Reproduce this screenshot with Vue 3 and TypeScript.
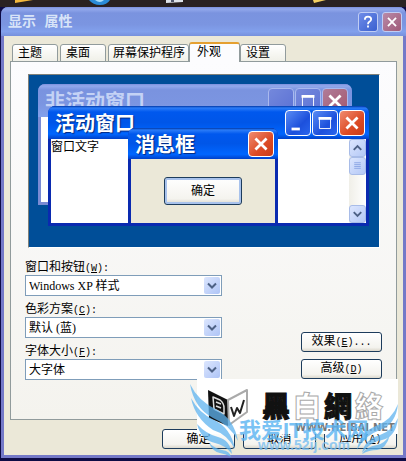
<script setup lang="ts">
import { ref } from 'vue'

interface Field {
  id: string
  label: string
  key: string
  value: string
}

const tabs = ['主题', '桌面', '屏幕保护程序', '外观', '设置']
const activeTab = ref('外观')

const fields = ref<Field[]>([
  { id: 'style', label: '窗口和按钮', key: 'W', value: 'Windows XP 样式' },
  { id: 'scheme', label: '色彩方案', key: 'C', value: '默认 (蓝)' },
  { id: 'size', label: '字体大小', key: 'F', value: '大字体' },
])
</script>

<template>
  <div class="desktop">
    <div class="strip">
      <svg viewBox="0 0 406 7" preserveAspectRatio="none" aria-hidden="true">
        <path d="M15 0h18l-6 1-12 2z" fill="#f3b83d" />
        <path d="M89 0h21q-3 5-10 5t-11-5z" fill="#2b8cd8" />
        <path d="M95 0h9q-4 4-9 0z" fill="#a9dcf8" />
        <path d="M166 0h17v2l-17 1z" fill="#dfe3ea" />
        <path d="M171 0h3v2h-3z" fill="#50566a" />
        <path d="M313 0h13l-12 3z" fill="#f5d060" />
      </svg>
    </div>
    <main class="window">
      <header class="titlebar">
        <h1>显示 属性</h1>
        <button class="cap help" type="button" aria-label="帮助">
          <svg viewBox="0 0 20 20"><path d="M6.5 7.5q0-3.500 3.500-3.500t3.500 3q0 1.600-2 2.800-1.500.9-1.500 2.700M10 14v2.200" /></svg>
        </button>
        <button class="cap close" type="button" aria-label="关闭">
          <svg viewBox="0 0 20 20"><path d="M5.500 5.500l9 9M14.500 5.500l-9 9" /></svg>
        </button>
      </header>

      <div class="body">
        <nav class="tabs" role="tablist">
          <button
            v-for="t in tabs"
            :key="t"
            type="button"
            role="tab"
            class="tab"
            :class="{ active: t === activeTab }"
            :aria-selected="t === activeTab"
            @click="activeTab = t"
          >{{ t }}</button>
        </nav>

        <section class="panel">
          <div class="preview">
            <div class="win inactive">
              <div class="bar">
                <span>非活动窗口</span>
                <button class="ctl" type="button" aria-label="最小化"></button>
                <button class="ctl" type="button" aria-label="最大化">
                  <svg viewBox="0 0 26 26"><path d="M7 8h12v11H7z" /><path class="thick" d="M6 8h14" /></svg>
                </button>
                <button class="ctl red" type="button" aria-label="关闭">
                  <svg viewBox="0 0 26 26"><path class="cross" d="M7 7l12 12M19 7L7 19" /></svg>
                </button>
              </div>
              <div class="client"></div>
            </div>

            <div class="win current">
              <div class="bar">
                <span>活动窗口</span>
                <button class="ctl" type="button" aria-label="最小化">
                  <svg viewBox="0 0 26 26"><path class="thick" d="M6 19.500h9" /></svg>
                </button>
                <button class="ctl" type="button" aria-label="最大化">
                  <svg viewBox="0 0 26 26"><path d="M7 8h12v11H7z" /><path class="thick" d="M6 8h14" /></svg>
                </button>
                <button class="ctl red" type="button" aria-label="关闭">
                  <svg viewBox="0 0 26 26"><path class="cross" d="M7 7l12 12M19 7L7 19" /></svg>
                </button>
              </div>
              <div class="client">
                <p>窗口文字</p>
                <div class="scroll">
                  <button class="sb" type="button" aria-label="向上">
                    <svg viewBox="0 0 16 16"><path d="M4 10l4-4 4 4" /></svg>
                  </button>
                  <div class="sb thumb">
                    <svg viewBox="0 0 16 16"><path d="M4.500 4.500h7M4.500 6.500h7M4.500 8.500h7M4.500 10.500h7" /></svg>
                  </div>
                  <button class="sb down" type="button" aria-label="向下">
                    <svg viewBox="0 0 16 16"><path d="M4 6l4 4 4-4" /></svg>
                  </button>
                </div>
              </div>
            </div>

            <div class="win message">
              <div class="bar">
                <span>消息框</span>
                <button class="ctl red" type="button" aria-label="关闭">
                  <svg viewBox="0 0 26 26"><path class="cross" d="M7 7l12 12M19 7L7 19" /></svg>
                </button>
              </div>
              <div class="client">
                <button class="btn focus" type="button">确定</button>
              </div>
            </div>
          </div>

          <div class="settings">
            <form class="fields" @submit.prevent>
              <div v-for="f in fields" :key="f.id" class="field">
                <label :for="f.id">{{ f.label }}<span class="mono">(<u>{{ f.key }}</u>):</span></label>
                <div class="combo">
                  <select :id="f.id" v-model="f.value">
                    <option :value="f.value">{{ f.value }}</option>
                  </select>
                  <svg viewBox="0 0 16 16" aria-hidden="true"><path d="M4 6l4 4 4-4" /></svg>
                </div>
              </div>
            </form>
            <div class="side">
              <button class="btn" type="button">效果<span class="mono">(<u>E</u>)...</span></button>
              <button class="btn" type="button">高级<span class="mono">(<u>D</u>)</span></button>
            </div>
          </div>
        </section>

        <footer class="actions">
          <button class="btn" type="button">确定</button>
          <button class="btn" type="button">取消</button>
          <button class="btn" type="button">应用<span class="mono">(<u>A</u>)</span></button>
        </footer>
      </div>
    </main>

    <svg class="watermark" viewBox="0 0 220 85" aria-hidden="true">
      <path d="M11 3h201v55H11z" fill="#fff" />
      <g stroke-linejoin="round">
        <path d="M22 14l20 10v26l-19-8z" fill="#111" />
        <path d="M42 24l19-10v22L43 49z" fill="#fff" stroke="#aaa" stroke-width="2" />
        <path d="M27 21l7 3q4 3 4 8v6l-10-5z" fill="none" stroke="#ddd" stroke-width="1.500" />
        <path d="M30 26l5 2M30 30l5 2" stroke="#ddd" stroke-width="1.500" />
        <path d="M45 31l3 9 3-8 3 5 4-13" fill="none" stroke="#222" stroke-width="2" />
      </g>
      <g class="brand">
        <text x="76" y="41">黑</text>
        <text x="107" y="41" class="hollow">白</text>
        <text x="138" y="41">網</text>
        <text x="169" y="41" class="hollow">絡</text>
      </g>
      <text class="site" x="109" y="55">WWW.HEIBAI.NET</text>
      <g class="wings">
        <path d="M4 8q8 17 27 26 17 9 21 31-8-16-25-23Q8 32 4 8z" />
        <path d="M5 22q8 15 23 22 17 8 21 29-8-15-22-19Q9 42 5 22z" />
        <path d="M11 48q9 10 21 13 12 3 14 17-7-9-17-11-14-3-18-19z" />
        <path d="M23 67q7 6 13 7 8 1 9 7-5-3-11-4-7-1-11-10z" />
        <path d="M212 28q-6 16-22 22-16 6-19 24 8-15 23-20 16-6 18-26z" />
        <path d="M212 42q-6 13-18 17-15 4-18 18 8-11 20-13 14-3 16-22z" />
        <path d="M204 59q-6 9-13 10-11 2-15 9 7-4 15-4 9-1 13-15z" />
      </g>
      <text class="name" x="53" y="62">我爱IT技术网</text>
      <text class="url" x="72" y="74">www.52ij.com</text>
    </svg>
  </div>
</template>

<style>
body {
  margin: 0;
}
</style>

<style scoped>
* {
  box-sizing: border-box;
}

.desktop {
  position: relative;
  min-height: 100vh;
  padding-bottom: 2px;
  background: #0d0b45;
  font: 12px/16px "Liberation Serif", "Noto Sans CJK SC", sans-serif;
  color: #000;
}

.strip {
  height: 7px;
  background: #2a2222;
}

.strip svg {
  display: block;
  width: 100%;
  height: 7px;
}

.window {
  margin-left: 1px;
  border: solid #7479c8;
  border-width: 0 3px 3px;
  border-radius: 7px 7px 0 0;
  background: #7479c8;
}

.titlebar {
  display: flex;
  align-items: center;
  gap: 4px;
  height: 29px;
  margin: 0 -3px;
  padding: 1px 4px 0 7px;
  border-radius: 7px 7px 0 0;
  background: linear-gradient(#7b8fdc 0, #93a9ec 2px, #7a93df 6px, #7b95e1 60%, #82a0ec 85%, #7690dc 100%);
}

h1 {
  flex: 1;
  margin: 0;
  font: bold 14px/20px "Liberation Mono", "Noto Sans CJK SC", sans-serif;
  color: #d8e4f8;
}

button {
  padding: 0;
  font: inherit;
  color: inherit;
}

.cap {
  width: 20px;
  height: 20px;
  border: 1px solid #c0cdf4;
  border-radius: 3px;
  background: linear-gradient(135deg, #6f8ce8, #3a60d0);
}

.cap.close {
  background: linear-gradient(135deg, #b98aa8, #a05a78);
}

.cap svg {
  display: block;
  width: 18px;
  height: 18px;
  fill: none;
  stroke: #fff;
  stroke-width: 2;
}

.body {
  padding: 6px;
  background: #ebe8d8;
}

.tabs {
  display: flex;
  align-items: flex-end;
  height: 20px;
  margin-bottom: -1px;
  padding-left: 2px;
}

.tab {
  height: 18px;
  margin-right: 2px;
  padding: 0 15px 0 5px;
  border: 1px solid #919b9c;
  border-radius: 3px 3px 0 0;
  background: linear-gradient(#fff, #f0f0e8);
  line-height: 16px;
}

.tab:nth-child(3) {
  margin-right: 0;
  padding: 0 3px 0 4px;
}

.tab.active {
  height: 20px;
  margin-right: 0;
  padding: 0 18px 2px 7px;
  border-top: 2px solid #e5a030;
  border-bottom: 0;
  background: #fcfcfe;
}

.panel {
  padding: 12px 14px 40px;
  border: 1px solid #919b9c;
  background: linear-gradient(#fcfcfe, #f4f3ee);
}

.preview {
  position: relative;
  height: 174px;
  margin: 0 2px 0 3px;
  border: 1px solid #808078;
  border-right-color: #fff;
  border-bottom-color: #fff;
  overflow: hidden;
  background: #004e98;
}

.win {
  position: absolute;
  display: flex;
  flex-direction: column;
  border: 3px solid #0a2ab0;
  border-top: 0;
  border-radius: 7px 7px 0 0;
  background: #0a2ab0;
}

.bar {
  display: flex;
  align-items: center;
  gap: 1px;
  height: 33px;
  margin: 0 -3px;
  padding: 0 4px 0 7px;
  border-radius: 7px 7px 0 0;
  background: linear-gradient(#0038a8 0, #2b7cf8 2px, #0058ee 6px, #0056e8 50%, #0066ff 85%, #0040c8 100%);
}

.bar span {
  flex: 1;
  font: bold 20px/24px "Noto Sans CJK SC", sans-serif;
  color: #fff;
  text-shadow: 1px 1px 1px #002880;
  white-space: nowrap;
}

.client {
  flex: 1;
  background: #fff;
}

.inactive {
  left: 9px;
  top: 9px;
  width: 314px;
  height: 121px;
  border-color: #7a8bd4;
  background: #7a8bd4;
}

.inactive .bar {
  background: linear-gradient(#7b8fdc 0, #93a9ec 2px, #7a93df 6px, #7b95e1 60%, #82a0ec 100%);
}

.inactive .bar span {
  color: #c4d2f5;
  text-shadow: none;
}

.current {
  left: 19px;
  top: 31px;
  width: 321px;
  height: 120px;
}

.current .client {
  display: flex;
  justify-content: space-between;
}

.current p {
  margin: 0;
}

.message {
  left: 99px;
  top: 53px;
  width: 150px;
  height: 98px;
}

.message .client {
  padding: 18px 33px;
  background: #ebe8d8;
}

.ctl {
  width: 26px;
  height: 26px;
  border: 1px solid #fff;
  border-radius: 4px;
  background: linear-gradient(135deg, #5a8cf4, #1c50dc 60%, #2a66ee);
}

.ctl.red {
  background: linear-gradient(135deg, #f08c70, #dc4a24 60%, #c83c18);
}

.inactive .ctl {
  border-color: #a9b9ee;
  background: linear-gradient(135deg, #7488dc, #5c72d4);
}

.inactive .ctl.red {
  background: linear-gradient(135deg, #b07c98, #a4586e);
}

.ctl svg {
  display: block;
  width: 24px;
  height: 24px;
  fill: none;
  stroke: #fff;
  stroke-width: 1;
}

.ctl .thick,
.ctl .cross {
  stroke-width: 3;
}

.scroll {
  display: flex;
  flex-direction: column;
  width: 17px;
  background: linear-gradient(90deg, #f0efe8, #fff);
}

.sb {
  width: 17px;
  height: 18px;
  border: 1px solid #a8bce8;
  border-radius: 3px;
  background: linear-gradient(135deg, #dce6fe, #b4c8f6);
}

.sb.down {
  margin-top: auto;
}

.sb svg {
  display: block;
  width: 15px;
  height: 16px;
  fill: none;
  stroke: #4d6185;
  stroke-width: 2;
}

.sb.thumb svg {
  stroke: #8ca6e4;
  stroke-width: 1;
}

.btn {
  height: 20px;
  border: 1px solid #1d3c5c;
  border-radius: 3px;
  background: linear-gradient(#fff, #f4f3ee 80%, #dcd8cc);
  line-height: 16px;
}

.btn.focus {
  width: 78px;
  height: 28px;
  box-shadow: inset 0 0 0 2px #a8c2ec;
}

.settings {
  display: flex;
  align-items: flex-end;
  justify-content: space-between;
  padding-top: 11px;
}

.fields {
  display: grid;
  gap: 6px;
  width: 197px;
}

.field label {
  display: block;
  height: 16px;
}

.mono {
  font: 10px/16px "Liberation Mono", monospace;
}

.combo {
  display: grid;
  height: 21px;
  margin-bottom: -1px;
}

.combo > * {
  grid-area: 1 / 1;
}

select {
  width: 100%;
  height: 21px;
  margin: 0;
  padding: 0 20px 0 3px;
  appearance: none;
  border: 1px solid #7f9db9;
  border-radius: 0;
  background: #fff;
  font: inherit;
  color: #000;
}

.combo svg {
  place-self: center end;
  width: 16px;
  height: 17px;
  margin-right: 2px;
  border-radius: 2px;
  background: linear-gradient(135deg, #dce6fe, #aec4f6);
  fill: none;
  stroke: #4d6185;
  stroke-width: 2;
  pointer-events: none;
}

.side {
  display: grid;
  gap: 7px;
  width: 81px;
}

.actions {
  display: flex;
  justify-content: flex-end;
  gap: 8px;
  padding-top: 9px;
}

.actions .btn {
  width: 73px;
}

.watermark {
  position: absolute;
  right: 0;
  bottom: 0;
  width: 220px;
  height: 85px;
  pointer-events: none;
}

.brand {
  font: 900 28px "Noto Sans CJK TC", sans-serif;
  fill: #111;
  stroke: #111;
  stroke-width: 1;
}

.brand .hollow {
  fill: #fff;
  stroke: #aaa;
}

.site {
  font: bold 10px "DejaVu Sans", sans-serif;
  fill: #777;
}

.wings {
  fill: #5fb4f0;
  opacity: 0.75;
}

.name {
  font: bold 22px "Liberation Sans", "Noto Sans CJK SC", sans-serif;
  fill: #5ab4f2;
  opacity: 0.8;
}

.url {
  font: bold 14px "Liberation Sans", sans-serif;
  fill: #7cc0f0;
  opacity: 0.8;
}
</style>
